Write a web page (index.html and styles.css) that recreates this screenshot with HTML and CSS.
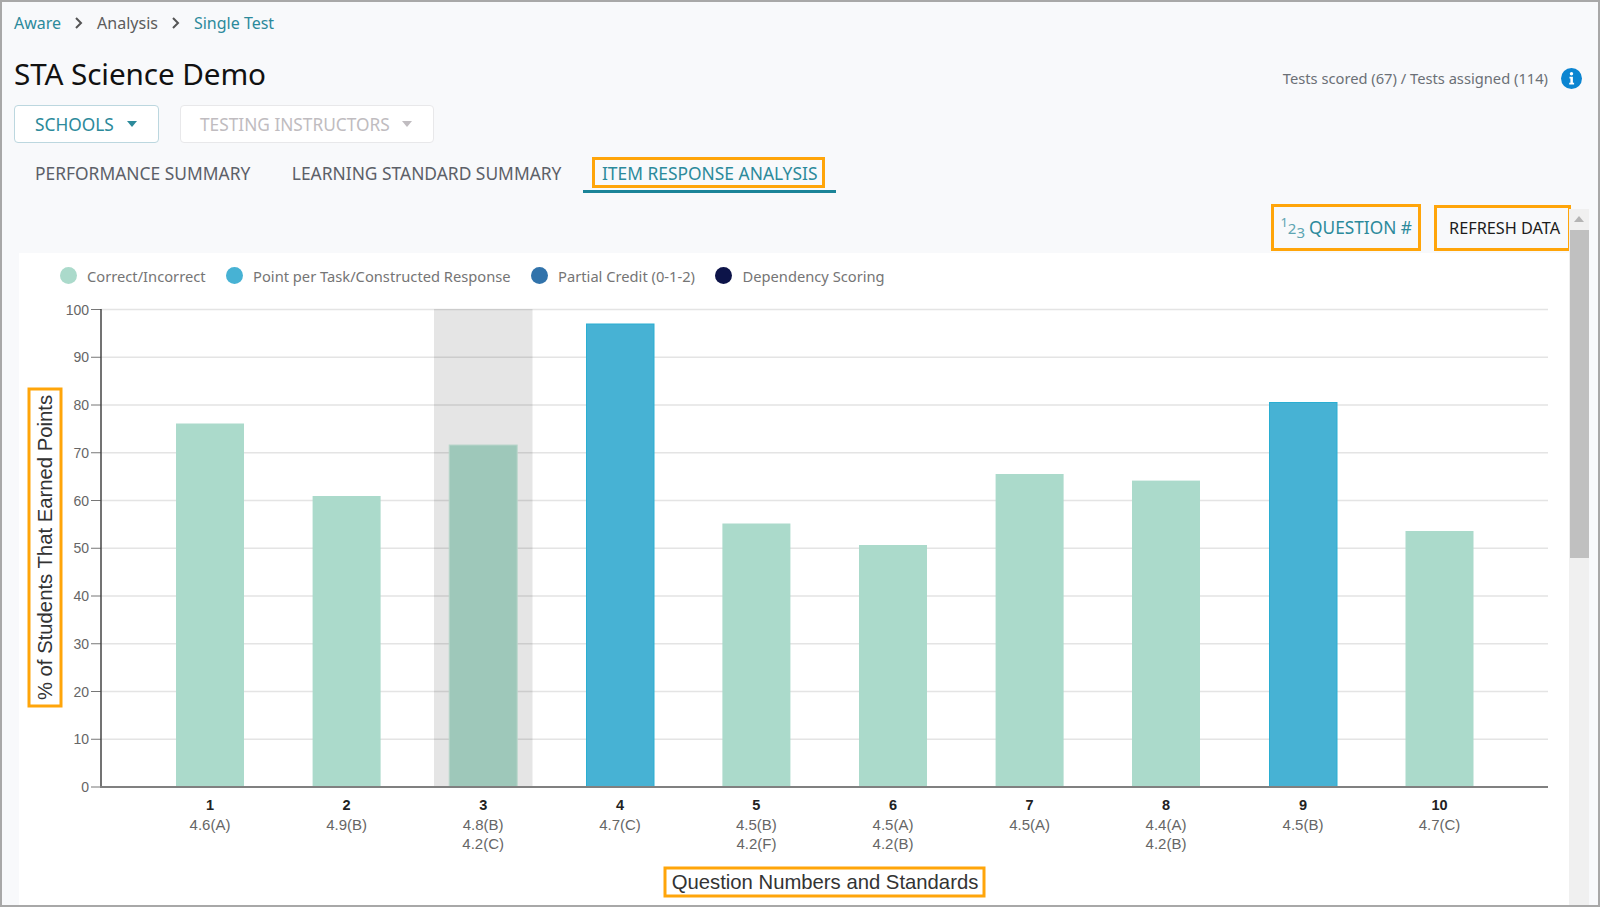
FILE: index.html
```html
<!DOCTYPE html>
<html lang="en">
<head>
<meta charset="utf-8">
<title>Single Test - STA Science Demo</title>
<link rel="stylesheet" href="styles.css">
</head>
<body>
<div class="frame">
  <nav class="crumbs">
    <a class="link">Aware</a>
    <svg class="chev" width="10" height="14" viewBox="0 0 10 14"><path d="M2 2l5 5-5 5" fill="none" stroke="#555" stroke-width="2"/></svg>
    <span>Analysis</span>
    <svg class="chev" width="10" height="14" viewBox="0 0 10 14"><path d="M2 2l5 5-5 5" fill="none" stroke="#555" stroke-width="2"/></svg>
    <a class="link">Single Test</a>
  </nav>
  <header class="title-row">
    <h1>STA Science Demo</h1>
    <div class="scored">
      <span>Tests scored (67) / Tests assigned (114)</span>
      <svg width="21" height="21" viewBox="0 0 21 21"><circle cx="10.5" cy="10.5" r="10.5" fill="#0b85d1"/><circle cx="10.5" cy="5.8" r="1.7" fill="#fff"/><path d="M8.5 8.800h3.400v6h1.200v1.800H8.200v-1.800h1.200v-4.200H8.500z" fill="#fff"/></svg>
    </div>
  </header>
  <div class="filters">
    <button class="drop active">SCHOOLS<i class="caret"></i></button>
    <button class="drop off">TESTING INSTRUCTORS<i class="caret"></i></button>
  </div>
  <div class="tabs">
    <div class="tab">PERFORMANCE SUMMARY</div>
    <div class="tab">LEARNING STANDARD SUMMARY</div>
    <div class="tab current"><span class="mark">ITEM RESPONSE ANALYSIS</span></div>
  </div>
  <div class="content">
    <div class="main">
      <div class="tools">
        <div class="tool question mark"><span class="digits"><sup>1</sup>2<sub>3</sub></span> QUESTION #</div>
        <div class="tool refresh mark">REFRESH DATA</div>
      </div>
      <section class="card">
        <div class="legend">
          <div class="key"><i class="dot green"></i>Correct/Incorrect</div>
          <div class="key"><i class="dot blue"></i>Point per Task/Constructed Response</div>
          <div class="key"><i class="dot steel"></i>Partial Credit (0-1-2)</div>
          <div class="key"><i class="dot navy"></i>Dependency Scoring</div>
        </div>
        <svg class="chart" width="1550" height="603" viewBox="19 302 1550 603">
          <g class="grid">
            <path d="M101 309.500H1548M101 357.250H1548M101 405H1548M101 452.750H1548M101 500.500H1548M101 548.250H1548M101 596H1548M101 643.750H1548M101 691.500H1548M101 739.250H1548"/>
          </g>
          <g class="ticks">
            <path d="M91 309.500h10M91 357.250h10M91 405h10M91 452.750h10M91 500.500h10M91 548.250h10M91 596h10M91 643.750h10M91 691.500h10M91 739.250h10M91 787h10"/>
          </g>
          <g class="ylab">
            <text x="89" y="314.500">100</text><text x="89" y="362.250">90</text><text x="89" y="410">80</text><text x="89" y="457.750">70</text><text x="89" y="505.500">60</text><text x="89" y="553.250">50</text><text x="89" y="601">40</text><text x="89" y="648.750">30</text><text x="89" y="696.500">20</text><text x="89" y="744.250">10</text><text x="89" y="792">0</text>
          </g>
          <rect class="band" x="434" y="309" width="98.500" height="478"/>
          <g class="bars">
            <rect class="b-green" x="176" y="423.500" width="68" height="363.500"/>
            <rect class="b-green" x="312.600" y="496" width="68" height="291"/>
            <rect class="b-hover" x="449.200" y="445" width="68" height="342"/>
            <rect class="b-blue" x="586.500" y="324" width="67.500" height="463"/>
            <rect class="b-green" x="722.400" y="523.500" width="68" height="263.500"/>
            <rect class="b-green" x="859" y="545" width="68" height="242"/>
            <rect class="b-green" x="995.600" y="474" width="68" height="313"/>
            <rect class="b-green" x="1132" y="480.600" width="68" height="306.400"/>
            <rect class="b-blue" x="1269.500" y="402.500" width="67.500" height="384.500"/>
            <rect class="b-green" x="1405.500" y="531" width="68" height="256"/>
          </g>
          <path class="axis-y" d="M101 309V787"/>
          <path class="axis-x" d="M100 787H1548"/>
          <g class="xnum">
            <text x="210" y="810">1</text><text x="346.600" y="810">2</text><text x="483.200" y="810">3</text><text x="620" y="810">4</text><text x="756.400" y="810">5</text><text x="893" y="810">6</text><text x="1029.600" y="810">7</text><text x="1166" y="810">8</text><text x="1303" y="810">9</text><text x="1439.500" y="810">10</text>
          </g>
          <g class="xstd">
            <text x="210" y="830">4.6(A)</text>
            <text x="346.600" y="830">4.9(B)</text>
            <text x="483.200" y="830">4.8(B)</text><text x="483.200" y="849">4.2(C)</text>
            <text x="620" y="830">4.7(C)</text>
            <text x="756.400" y="830">4.5(B)</text><text x="756.400" y="849">4.2(F)</text>
            <text x="893" y="830">4.5(A)</text><text x="893" y="849">4.2(B)</text>
            <text x="1029.600" y="830">4.5(A)</text>
            <text x="1166" y="830">4.4(A)</text><text x="1166" y="849">4.2(B)</text>
            <text x="1303" y="830">4.5(B)</text>
            <text x="1439.500" y="830">4.7(C)</text>
          </g>
          <rect class="hl" x="29" y="389" width="32" height="317"/>
          <text class="title" transform="translate(52 547.500) rotate(-90)">% of Students That Earned Points</text>
          <rect class="hl" x="665" y="868" width="319" height="28"/>
          <text class="title" x="825" y="889">Question Numbers and Standards</text>
        </svg>
      </section>
    </div>
    <div class="scroll">
      <div class="arrow"></div>
      <div class="thumb"></div>
    </div>
  </div>
</div>
</body>
</html>
```

FILE: styles.css
```css
* { box-sizing: border-box; }
html, body { margin: 0; height: 100%; overflow: hidden; }
body { background: #f8f9fb; font-family: "Noto Sans", "Open Sans", sans-serif; color: #555; }
.frame {
  height: 907px;
  border: 2px solid #a8a8a8;
  display: flex;
  flex-direction: column;
  overflow: hidden;
}
.crumbs {
  display: flex;
  align-items: center;
  gap: 13px;
  height: 22px;
  margin: 10px 0 0 12px;
  font-size: 16px;
  color: #5c5c5c;
}
.link { color: #2c8a9b; }
.title-row {
  display: flex;
  justify-content: space-between;
  align-items: center;
  margin: 18px 16px 0 12px;
  height: 42px;
}
h1 { margin: 0; font-size: 29.700px; font-weight: 400; color: #111; letter-spacing: -0.1px; }
.scored { display: flex; align-items: center; gap: 13px; font-size: 14.700px; color: #6b7076; margin-top: 10px; }
.filters { display: flex; gap: 21px; margin: 11px 0 0 12px; }
.drop {
  height: 38px;
  border-radius: 4px;
  background: #fff;
  font: inherit;
  font-size: 17.300px;
  white-space: nowrap;
  display: flex;
  align-items: center;
  padding: 0 19px;
  gap: 12px;
}
.drop.active { border: 1px solid #bcd7df; color: #2c8a9b; width: 145px; padding-left: 20px; gap: 13px; }
.drop.off { border: 1px solid #e8e8ea; color: #c0bcc0; width: 254px; }
.caret { width: 0; height: 0; border: solid transparent; border-width: 6px 5.500px 0; border-top-color: currentColor; }
.tabs { display: flex; margin: 13px 0 0 13px; height: 46px; }
.tab { padding: 6px 21.500px 0 20px; font-size: 17.400px; color: #5c6068; height: 35px; line-height: 22px; white-space: nowrap; }
.tab.current { color: #2c8a9b; border-bottom: 3px solid #1b8498; height: 37px; padding: 3px 13px 0 11px; display: flex; align-items: flex-start; }
.mark { outline: 3px solid #ffa50a; outline-offset: -1.500px; }
.tab.current .mark { padding: 3px 6px 1px 8px; line-height: 23px; }
.content { flex: 1; display: flex; min-height: 0; }
.main { width: 1567px; padding-left: 17px; display: flex; flex-direction: column; }
.tools { display: flex; justify-content: flex-end; gap: 17px; height: 51px; flex: none; padding-top: 4px; align-items: flex-start; }
.tool { white-space: nowrap; display: flex; align-items: center; }
.question { height: 43px; padding: 0 7px 0 7px; font-size: 17.300px; color: #2c8a9b; gap: 4px; }
.digits { font-size: 15px; color: #5ea5b2; }
.digits sup { font-size: 13px; vertical-align: 7px; line-height: 0; }
.digits sub { font-size: 15px; vertical-align: -4px; line-height: 0; }
.refresh { height: 42px; margin-top: 1px; padding: 0 8px 0 13px; font-size: 16.300px; color: #1c1c1c; width: 133px; }
.card { background: #fff; flex: 1; display: flex; flex-direction: column; min-height: 0; overflow: hidden; }
.legend { display: flex; flex: none; height: 49px; align-items: center; padding: 0 0 4px 41px; gap: 20.500px; font-size: 14.700px; color: #757575; }
.key { display: flex; align-items: center; gap: 10px; white-space: nowrap; }
.dot { width: 17px; height: 17px; border-radius: 50%; }
.green { background: #abdacb; }
.blue { background: #47b2d4; }
.steel { background: #3173ab; }
.navy { background: #0d1449; }
.chart { display: block; flex: none; }
.chart text { font-family: "Liberation Sans", Arial, sans-serif; }
.grid path { stroke: #e4e4e4; stroke-width: 1.500px; fill: none; }
.ticks path { stroke: #777; stroke-width: 1px; fill: none; }
.ylab text { font-size: 14px; fill: #666; text-anchor: end; }
.band { fill: rgba(0, 0, 0, .1); }
.b-green { fill: #abdacb; }
.b-hover { fill: #9ec8ba; stroke: #b9d6cb; stroke-width: 1px; }
.b-blue { fill: #47b2d4; stroke: #2aaed2; stroke-width: 1px; }
.axis-y { stroke: #444; stroke-width: 1.500px; fill: none; }
.axis-x { stroke: #808080; stroke-width: 2px; fill: none; }
.xnum text { font-size: 14.500px; font-weight: 700; fill: #222; text-anchor: middle; }
.xstd text { font-size: 15px; fill: #666; text-anchor: middle; }
.title { font-size: 20.300px; fill: #333; text-anchor: middle; }
.hl { fill: none; stroke: #ffa50a; stroke-width: 3px; }
.scroll { width: 20px; background: #f0f0f0; margin-top: 7px; display: flex; flex-direction: column; }
.arrow { height: 21px; position: relative; flex: none; }
.arrow::after { content: ""; position: absolute; left: 5px; top: 7px; border: solid transparent; border-width: 0 5px 6px; border-bottom-color: #b4b4b4; }
.thumb { height: 328px; flex: none; background: #c0c0c0; margin-left: 1px; }
```
